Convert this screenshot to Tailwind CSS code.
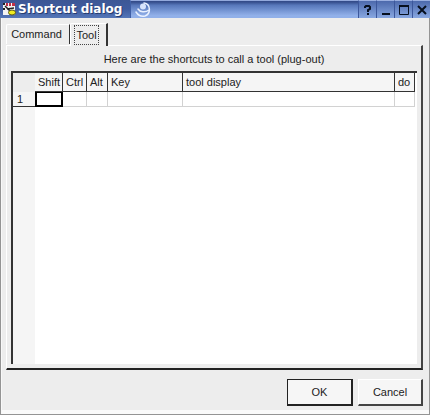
<!DOCTYPE html>
<html lang="en">
<head>
  <meta charset="UTF-8" />
  <meta name="viewport" content="width=device-width, initial-scale=1" />
  <title>Shortcut dialog</title>
  <script src="https://cdn.jsdelivr.net/npm/@tailwindcss/browser@4"></script>
</head>
<body class="h-screen flex flex-col overflow-hidden bg-[#ededed] font-['Liberation_Sans',sans-serif] text-[11px] text-[#222]">
  <header class="h-[18px] shrink-0 flex items-center pl-[2px] bg-linear-to-b from-[#3d5795] via-[#3f5c9f] to-[#5577b8]">
    <svg class="w-4 h-4 shrink-0" viewBox="0 0 16 16" aria-hidden="true">
      <path fill="#f4f4f4" d="M1 2h12v12H1z" />
      <path fill="#c03048" d="M4 2h2v3H4zM7 2h2v3H7zM10 2h3v3h-3z" />
      <path fill="#222" d="M1 2h2v2H1zM1 7h2v2H1z" />
      <path stroke="#222" stroke-width="1.5" d="M3 5l5 5M5 8l7-1" />
      <ellipse cx="10" cy="11.500" rx="3.500" ry="2.500" fill="#f0ec20" stroke="#55551a" />
    </svg>
    <h1 class="font-['DejaVu_Sans',sans-serif] font-bold text-xs leading-4 text-white whitespace-nowrap [text-shadow:1px_1px_#263c70]">Shortcut dialog</h1>
    <div class="ml-2 flex-1 self-stretch flex items-center pl-1 border-l border-[#3f5fa5] bg-linear-to-b from-[#344c8a] from-5% via-[#5878bb] via-25% to-[#91b0e9] to-85% border-t border-t-[#93a9dc]">
      <svg class="w-4 h-4" viewBox="0 0 16 16" fill="none" aria-hidden="true">
        <circle cx="8" cy="4.500" r="3" fill="#d8e4fc" />
        <path stroke="#e9f1ff" stroke-width="1.500" stroke-linecap="round" d="M9 1c7 1 7 11 1 13-4 1-7-1-9-4M3 7c2 3 7 4 11 1" />
      </svg>
    </div>
    <nav class="flex self-stretch text-[#07101f]">
      <button type="button" aria-label="Help" class="w-[18px] flex items-center justify-center border-l border-t border-[#3c579b] border-t-[#9aafe0] bg-linear-to-b from-[#4c69ac] to-[#89a8e1]">
        <svg class="w-3 h-3" viewBox="0 0 12 12" fill="none" stroke="currentColor" stroke-width="2" aria-hidden="true"><path d="M3 4V3l1-1h3l1 1v2L6 6v2M5 10h2" /></svg>
      </button>
      <button type="button" aria-label="Minimize" class="w-[18px] flex items-center justify-center border-l border-t border-[#3c579b] border-t-[#9aafe0] bg-linear-to-b from-[#4c69ac] to-[#89a8e1]">
        <svg class="w-3 h-3" viewBox="0 0 12 12" fill="none" stroke="currentColor" stroke-width="2" aria-hidden="true"><path d="M2 10h8" /></svg>
      </button>
      <button type="button" aria-label="Maximize" class="w-[18px] flex items-center justify-center border-l border-t border-[#3c579b] border-t-[#9aafe0] bg-linear-to-b from-[#4c69ac] to-[#89a8e1]">
        <svg class="w-3 h-3" viewBox="0 0 12 12" fill="none" stroke="currentColor" aria-hidden="true"><path d="M1.500 2v8.500h9V2" /><path stroke-width="2" d="M1 2h10" /></svg>
      </button>
      <button type="button" aria-label="Close" class="w-[18px] flex items-center justify-center border-l border-t border-[#3c579b] border-t-[#9aafe0] bg-linear-to-b from-[#4c69ac] to-[#89a8e1]">
        <svg class="w-3 h-3" viewBox="0 0 12 12" fill="none" stroke="currentColor" stroke-width="2" aria-hidden="true"><path d="M2 2l8 8M10 2l-8 8" /></svg>
      </button>
    </nav>
  </header>

  <main class="flex-1 min-h-0 flex flex-col border-x border-b border-[#949494]">
    <div class="flex-1 min-h-0 flex flex-col pl-1 pr-[6px] pt-[5px] pb-1 border-b-4 border-b-[#fafafa] border-l border-l-[#f8f8f8]">
      <div role="tablist" class="h-[22px] shrink-0 flex items-end">
        <button type="button" role="tab" aria-selected="false" class="w-16 h-5 mb-px pr-[3px] border-l border-t border-r border-white border-r-[#333] rounded-tl-xs">Command</button>
        <button type="button" role="tab" aria-selected="true" class="relative z-10 w-[38px] h-[23px] -mb-px pr-1 flex items-center justify-center border-l border-t border-r-2 border-white border-r-[#333] rounded-tl-xs bg-[#ededed]">
          <span class="border border-dotted border-[#444] px-px leading-[18px]">Tool</span>
        </button>
      </div>

      <section role="tabpanel" class="flex-1 min-h-0 flex flex-col border-l border-t border-white border-r-2 border-b-2 border-r-[#444] border-b-[#222] px-1 pb-1">
        <p class="h-[25px] shrink-0 leading-[26px] text-center whitespace-nowrap">Here are the shortcuts to call a tool (plug-out)</p>
        <div class="flex-1 min-h-0 flex flex-col bg-white border-l-2 border-t-2 border-[#333] pr-[2px]">
          <table class="w-full table-fixed border-separate border-spacing-0">
            <colgroup>
              <col class="w-[22px]" />
              <col class="w-7" />
              <col class="w-6" />
              <col class="w-[21px]" />
              <col class="w-[75px]" />
              <col />
              <col class="w-5" />
            </colgroup>
            <thead class="bg-[#f5f5f5] text-left whitespace-nowrap">
              <tr class="h-[19px]">
                <td class="bg-[#ededed]"></td>
                <th scope="col" class="p-0 pl-[3px] font-normal border-r border-b border-[#333]">Shift</th>
                <th scope="col" class="p-0 pl-[3px] font-normal border-r border-b border-[#333]">Ctrl</th>
                <th scope="col" class="p-0 pl-[3px] font-normal border-r border-b border-[#333]">Alt</th>
                <th scope="col" class="p-0 pl-[3px] font-normal border-r border-b border-[#333]">Key</th>
                <th scope="col" class="p-0 pl-[3px] font-normal border-r border-b border-[#333]">tool display</th>
                <th scope="col" class="p-0 pl-[3px] font-normal border-r border-b border-[#333]">do</th>
              </tr>
            </thead>
            <tbody>
              <tr class="h-[15px]">
                <th scope="row" class="p-0 pl-1 text-left leading-[14px] font-normal bg-[#f5f5f5] border-b border-[#333]">1</th>
                <td class="p-0 border-2 border-t border-black"></td>
                <td class="p-0 border-r border-b border-[#d2d2d2]"></td>
                <td class="p-0 border-r border-b border-[#d2d2d2]"></td>
                <td class="p-0 border-r border-b border-[#d2d2d2]"></td>
                <td class="p-0 border-r border-b border-[#d2d2d2]"></td>
                <td class="p-0 border-r border-b border-[#d2d2d2]"></td>
              </tr>
            </tbody>
          </table>
          <div class="flex-1 w-[22px] bg-[#f5f5f5]"></div>
        </div>
      </section>

      <footer class="shrink-0 flex justify-end gap-[5px] pt-[9px]">
        <button type="button" class="w-[66px] h-[27px] bg-[#f6f6f6] border border-r-2 border-b-2 border-[#222]">OK</button>
        <button type="button" class="w-[65px] h-[27px] bg-[#f6f6f6] border border-white border-r-2 border-b-2 border-r-[#444] border-b-[#444]">Cancel</button>
      </footer>
    </div>
  </main>
</body>
</html>
